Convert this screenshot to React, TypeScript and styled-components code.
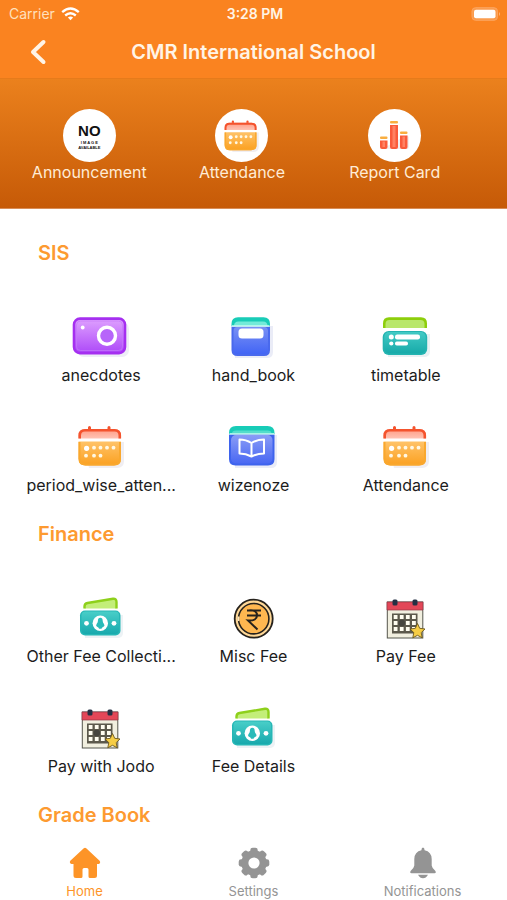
import React from "react";
import styled, { createGlobalStyle } from "styled-components";

const Global = createGlobalStyle`
  * { box-sizing: border-box; }
  body { margin: 0; background: #fff; font-family: Inter, "Liberation Sans", sans-serif; }
  button { font: inherit; color: inherit; background: none; border: 0; padding: 0; cursor: pointer; }
`;

const Screen = styled.div`
  display: flex;
  flex-direction: column;
  min-height: 100vh;
`;

const Header = styled.header`
  background: #fa8320;
  color: #fff4e6;
  border-bottom: 1px solid #e67b1b;
`;

const StatusBar = styled.div`
  display: grid;
  grid-template-columns: 1fr auto 1fr;
  align-items: center;
  height: 27px;
  padding: 0 6px 0 9px;
  font-size: 14px;
`;

const Carrier = styled.span`
  display: flex;
  align-items: center;
  gap: 6px;
  color: #ffe0bd;
`;

const Clock = styled.span`
  font-weight: 600;
`;

const Battery = styled.svg`
  justify-self: end;
`;

const TitleBar = styled.div`
  display: grid;
  grid-template-columns: 76px 1fr 76px;
  align-items: center;
  height: 51px;
  padding-bottom: 1px;
`;

const BackButton = styled.button`
  display: flex;
  justify-content: center;
`;

const Title = styled.h1`
  margin: 0;
  font-size: 20px;
  line-height: 24px;
  font-weight: 600;
  text-align: center;
`;

const Hero = styled.nav`
  display: grid;
  grid-template-columns: repeat(3, 1fr);
  height: 130px;
  padding: 30px 36px 0 13px;
  background: linear-gradient(#eb811d, #c65a07);
  border-bottom: 1px solid #d98d57;
`;

const HeroItem = styled.button`
  display: flex;
  flex-direction: column;
  align-items: center;
  align-self: start;
  color: #ffecd6;
  font-size: 16px;
  line-height: 20px;
`;

const Disc = styled.span`
  display: flex;
  flex-direction: column;
  align-items: center;
  justify-content: center;
  width: 53px;
  height: 53px;
  border-radius: 50%;
  background: #fff;
  color: #111;
`;

const NoText = styled.span<{ $size: number; $line: number }>`
  font-family: "Liberation Sans", sans-serif;
  font-weight: 700;
  font-size: ${(p) => p.$size}px;
  line-height: ${(p) => p.$line}px;
`;

const Main = styled.main`
  flex: 1;
  padding: 24px 25px 0;
`;

const SectionTitle = styled.h2<{ $last?: boolean }>`
  margin: 0;
  padding-left: 13px;
  height: ${(p) => (p.$last ? 38 : 61)}px;
  font-size: 20px;
  line-height: 40px;
  font-weight: 600;
  color: #fd9a30;
`;

const Grid = styled.div`
  display: grid;
  grid-template-columns: repeat(3, 1fr);
`;

const Tile = styled.button`
  display: flex;
  flex-direction: column;
  align-items: center;
  height: 110px;
  padding-top: 20px;
  color: #1c1c1c;
  font-size: 16px;
  line-height: 20px;
  white-space: nowrap;
`;

const TileLabel = styled.span`
  margin-top: 7px;
`;

const TabBar = styled.nav`
  position: sticky;
  bottom: 0;
  display: grid;
  grid-template-columns: repeat(3, 1fr);
  background: #fff;
  padding: 10px 0 1px;
`;

const Tab = styled.a<{ $active?: boolean }>`
  display: flex;
  flex-direction: column;
  align-items: center;
  gap: 4px;
  color: ${(p) => (p.$active ? "#fd9427" : "#949494")};
  font-size: 13px;
  line-height: 16px;
  text-decoration: none;
`;

const Pic = ({ small, children }: { small?: boolean; children: React.ReactNode }) => (
  <svg width={small ? 45 : 60} height={small ? 33 : 44} viewBox="0 0 60 44" aria-hidden="true">
    {children}
  </svg>
);

const Grad = ({ id, from, to }: { id: string; from: string; to: string }) => (
  <linearGradient id={id} x1="0" y1="0" x2="0" y2="1">
    <stop offset="0" stopColor={from} />
    <stop offset="1" stopColor={to} />
  </linearGradient>
);

const Camera = () => (
  <Pic>
    <defs><Grad id="cam" from="#dfa2ff" to="#ad49f8" /></defs>
    <rect x="6" y="8" width="52" height="35" rx="7" fill="#eeeef6" />
    <rect x="3" y="4.600" width="51" height="34.500" rx="6" fill="url(#cam)" stroke="#a52ff0" strokeWidth="2.600" />
    <rect x="5.500" y="7" width="46" height="29.500" rx="4" fill="none" stroke="#c478fb" strokeWidth="1" opacity=".7" />
    <circle cx="11.700" cy="13.500" r="1.900" fill="#fff" />
    <circle cx="36" cy="21.700" r="8.500" fill="#b765fa" stroke="#fff" strokeWidth="3.400" />
  </Pic>
);

const Calendar = ({ small }: { small?: boolean }) => (
  <Pic small={small}>
    <defs>
      <Grad id="calTop" from="#ff9b83" to="#ffc3b4" />
      <Grad id="calBody" from="#ffc368" to="#fba020" />
    </defs>
    <path d="M12 18H53V37Q53 44 46 44H18Z" fill="#f0eef2" />
    <path d="M18.500 3.500v4M38 3.500v4" stroke="#f4532d" strokeWidth="3" strokeLinecap="round" />
    <path d="M7.500 14.500V11.500Q7.500 5 14 5H43.500Q50 5 50 11.500V14.500Z" fill="url(#calTop)" />
    <path d="M8.700 14.500V11.500Q8.700 6.200 14 6.200H43.500Q48.800 6.200 48.800 11.500V14.500" fill="none" stroke="#f4532d" strokeWidth="2.600" />
    <path d="M7.500 17.500H50V34.500Q50 41.500 43 41.500H14.500Q7.500 41.500 7.500 34.500Z" fill="url(#calBody)" />
    <path d="M8.500 18V34.500Q8.500 40.500 14.500 40.500H43Q49 40.500 49 34.500V18" fill="none" stroke="#f9a82e" strokeWidth="2" />
    <circle cx="15.600" cy="24.300" r="2.600" fill="#fff" />
    <g fill="#fff8e4">
      {[23, 29.500, 36, 42.500].map((x) => <circle key={x} cx={x} cy="23.700" r="1.900" />)}
      {[15, 23, 29.500].map((x) => <circle key={x} cx={x} cy="31.700" r="1.900" />)}
    </g>
  </Pic>
);

const HandBook = () => (
  <Pic>
    <defs><Grad id="hand" from="#7990f4" to="#4265f5" /></defs>
    <path d="M12 12H50V38Q50 44 44 44H12Z" fill="#eaecf7" />
    <path d="M8.500 12V10Q8.500 3.300 15 3.300H40.500Q47 3.300 47 10V12Z" fill="#18ccb7" />
    <path d="M11 12Q11 7.500 15.500 7.500H40Q44.500 7.500 44.500 12Z" fill="#73ead9" />
    <path d="M8.500 12.500H47V36Q47 42 41 42H14.500Q8.500 42 8.500 36Z" fill="#4969ed" />
    <rect x="10.500" y="13" width="34.500" height="27" rx="4" fill="url(#hand)" />
    <path d="M9 12H46.500" stroke="#c9fbf0" strokeWidth="1.500" />
    <rect x="15.500" y="14.500" width="25" height="10" rx="3.500" fill="#fff" />
  </Pic>
);

const OpenBook = () => (
  <Pic>
    <defs><Grad id="open" from="#8a9cf6" to="#4968f3" /></defs>
    <path d="M12 11H54V38Q54 44 48 44H12Z" fill="#eaecf7" />
    <path d="M6 10V9Q6 2 13 2H44.500Q51.500 2 51.500 9V10Z" fill="#18ccb7" />
    <path d="M9 9.500Q9 6.500 13 6.500H44.500Q48.500 6.500 48.500 9.500Z" fill="#54ddcb" />
    <path d="M6 10.500H51.500V35Q51.500 41.500 45 41.500H12.500Q6 41.500 6 35Z" fill="#3e63ed" />
    <rect x="8" y="11" width="41.500" height="28.500" rx="5" fill="url(#open)" />
    <path d="M6.500 9.800H51" stroke="#a9f3e6" strokeWidth="1.500" />
    <path d="M28.500 19Q23 15.500 16.500 15.500V29.500Q23 29.500 28.500 32.500Q34 29.500 41 29.500V15.500Q34 15.500 28.500 19V32.500" fill="none" stroke="#fff" strokeWidth="2" strokeLinejoin="round" />
  </Pic>
);

const Timetable = () => (
  <Pic>
    <defs><Grad id="time" from="#42cac5" to="#17aaa9" /></defs>
    <path d="M12 20H54V37Q54 43 48 43H12Z" fill="#e9f1f3" />
    <path d="M7 14V9.500Q7 3.300 13 3.300H45Q51 3.300 51 9.500V14Z" fill="#8dce0b" />
    <path d="M9.500 14V10Q9.500 6 13.500 6H44.500Q48.500 6 48.500 10V14Z" fill="#b9e76b" />
    <rect x="6.700" y="17" width="44.500" height="24" rx="6" fill="#24b4b1" />
    <rect x="8.200" y="18" width="41.500" height="21.500" rx="5" fill="url(#time)" />
    <g fill="#fff">
      <circle cx="15.300" cy="23" r="2.500" />
      <circle cx="15.300" cy="29.500" r="2.100" />
      <rect x="19" y="20.500" width="25" height="5" rx="2.200" />
      <rect x="19" y="27.600" width="13" height="4" rx="1.800" />
    </g>
  </Pic>
);

const Money = () => (
  <Pic>
    <defs><Grad id="cash" from="#48cec8" to="#18a9ad" /></defs>
    <path d="M14 20H52V38Q52 43 46 43H14Z" fill="#edf2f5" />
    <path d="M13.500 13.500V11.500Q13.500 8.500 16.500 8L42 3.800Q45.500 3.500 45.500 7V13.500" fill="#c3ee79" stroke="#8ed01b" strokeWidth="2.400" />
    <rect x="9" y="15.500" width="40.500" height="25" rx="5" fill="#26b7b6" />
    <rect x="10.500" y="16.500" width="37.500" height="22.500" rx="4" fill="url(#cash)" />
    <circle cx="29.300" cy="28.300" r="7.700" fill="#fff" />
    <path d="M29.300 22.800Q31.700 22.800 31.700 26Q31.700 27.500 33 29Q34.200 31 32.500 31.700Q31 32 30.500 33.700H28.100Q27.600 32 26.100 31.700Q24.400 31 25.600 29Q26.900 27.500 26.900 26Q26.900 22.800 29.300 22.800Z" fill="#2abbb9" />
    <circle cx="15.500" cy="28.300" r="2.400" fill="#fff" />
    <circle cx="43" cy="28.300" r="2.400" fill="#fff" />
  </Pic>
);

const Rupee = () => (
  <Pic>
    <circle cx="30.700" cy="23.700" r="19" fill="#ffd897" stroke="#26221d" strokeWidth="1.800" />
    <circle cx="30.700" cy="23.700" r="15.200" fill="#ffb750" stroke="#26221d" strokeWidth="1.600" />
    <path d="M15.600 21.500A16 16 0 0 0 15.600 26" stroke="#ffe7b9" strokeWidth="2" fill="none" />
    <path d="M24 15.500H38M24 20.500H38M25.500 15.500Q34 14.500 34 20.500Q34 26 25 25.500L34.500 34.500" fill="none" stroke="#26221d" strokeWidth="2" />
  </Pic>
);

const StarCalendar = () => (
  <Pic>
    <rect x="11.300" y="7" width="35.500" height="36" fill="#f1efdf" stroke="#55564c" strokeWidth="1" />
    <path d="M11 7H47V15H11Z" fill="#e34758" stroke="#8f3542" strokeWidth=".7" />
    <rect x="16.500" y="4.500" width="5" height="6" rx="1.500" fill="#243044" />
    <rect x="36.500" y="4.500" width="5" height="6" rx="1.500" fill="#243044" />
    <rect x="16" y="18.500" width="25.500" height="20" fill="#5c594c" />
    <g fill="#fffdf0">
      {[20, 26, 32].map((y) => [17.700, 23.800, 29.900, 36].map((x) => (
        <rect key={`${x}-${y}`} x={x} y={y} width="3.800" height="4" />
      )))}
    </g>
    <circle cx="25.800" cy="28" r="3.200" fill="#46453e" />
    <path d="M41.500 28.500L43.700 33.300L49 34L45.200 37.600L46.200 42.800L41.500 40.300L36.800 42.800L37.800 37.600L34 34L39.300 33.300Z" fill="#f6cd45" stroke="#6b571b" strokeWidth=".9" strokeLinejoin="round" />
  </Pic>
);

const Bars = () => (
  <svg width="34" height="34" viewBox="0 0 34 34" aria-hidden="true">
    <path d="M4 30H30L31 28V18L29 16Z" fill="#f2eff1" />
    {[[2, 21.500, 7.500], [12, 6, 8], [22, 16.500, 7.500]].map(([x, y, w]) => (
      <g key={x}>
        <rect x={x} y={y - 4} width={w} height="2.400" rx="1" fill="#f9ae40" />
        <path d={`M${x} ${y}h${w}V28q0 2-2 2h-${w - 4}q-2 0-2-2Z`} fill="#fa5b3b" />
        <rect x={x + 2.500} y={y + 1} width={w - 5} height={27 - y} fill="#ff8163" />
      </g>
    ))}
  </svg>
);

const HomeIcon = () => (
  <svg width="32" height="32" viewBox="0 0 32 32" fill="currentColor" aria-hidden="true">
    <path d="M14.800 1.200Q16 .3 17.200 1.200L30.600 13.800Q32 16 29.800 17H28V28.500Q28 31 25.500 31H21Q19.500 31 19.500 29.500V22.500Q19.500 21 18 21H15Q13.500 21 13.500 22.500V29.500Q13.500 31 12 31H7Q4.500 31 4.500 28.500V17H2.500Q0 16 1.300 13.800Z" />
  </svg>
);

const GearIcon = () => (
  <svg width="32" height="32" viewBox="0 0 32 32" aria-hidden="true">
    <g fill="currentColor">
      {[0, 45, 90, 135].map((a) => (
        <rect key={a} x="12.300" y=".7" width="7.400" height="30.600" rx="2.400" transform={`rotate(${a} 16 16)`} />
      ))}
      <circle cx="16" cy="16" r="12.700" />
    </g>
    <circle cx="16" cy="16" r="5.600" fill="#fff" />
  </svg>
);

const BellIcon = () => (
  <svg width="32" height="32" viewBox="0 0 32 32" fill="currentColor" aria-hidden="true">
    <path d="M16 .5Q17.500 .8 17.600 3.300Q24.500 4.800 24.700 12V18.500Q25 21 28 23.500Q29.800 26 27.500 26.300H4.500Q2.200 26 4 23.500Q7 21 7.300 18.500V12Q7.500 4.800 14.400 3.300Q14.500 .8 16 .5ZM11 27.800H21Q19 31.300 16 31.300Q13 31.300 11 27.800Z" />
  </svg>
);

const sections = [
  {
    title: "SIS",
    tiles: [
      ["anecdotes", Camera], ["hand_book", HandBook], ["timetable", Timetable],
      ["period_wise_atten...", Calendar], ["wizenoze", OpenBook], ["Attendance", Calendar],
    ] as [string, React.ComponentType][],
  },
  {
    title: "Finance",
    tiles: [
      ["Other Fee Collecti...", Money], ["Misc Fee", Rupee], ["Pay Fee", StarCalendar],
      ["Pay with Jodo", StarCalendar], ["Fee Details", Money],
    ] as [string, React.ComponentType][],
  },
];

export default function App() {
  return (
    <Screen>
      <Global />
      <Header>
        <StatusBar>
          <Carrier>
            Carrier
            <svg width="19" height="14" viewBox="0 0 19 14" fill="none" stroke="#fff" strokeWidth="2.400" aria-hidden="true">
              <path d="M1.200 5.200Q9.500 -2 17.800 5.200M4.200 8.500Q9.500 4 14.800 8.500" />
              <path d="M9.500 13.300L6.900 10.500Q9.500 8.500 12.100 10.500Z" fill="#fff" stroke="none" />
            </svg>
          </Carrier>
          <Clock>3:28 PM</Clock>
          <Battery width="30" height="14" viewBox="0 0 30 14" aria-hidden="true">
            <rect x="1" y=".7" width="25.500" height="12.600" rx="3.500" fill="#fb9b4c" stroke="#fca560" />
            <rect x="3" y="2.700" width="21.500" height="8.600" rx="2" fill="#fff" />
            <path d="M28 5Q30 7 28 9Z" fill="#fdb67b" />
          </Battery>
        </StatusBar>
        <TitleBar>
          <BackButton aria-label="Back">
            <svg width="18" height="26" viewBox="0 0 18 26" fill="none" stroke="currentColor" strokeWidth="4" strokeLinecap="round" strokeLinejoin="round" aria-hidden="true">
              <path d="M14.500 3L4 13L14.500 23" />
            </svg>
          </BackButton>
          <Title>CMR International School</Title>
        </TitleBar>
      </Header>
      <Hero aria-label="Shortcuts">
        <HeroItem>
          <Disc>
            <NoText $size={15} $line={18}>NO</NoText>
            <NoText $size={4} $line={5}>I M A G E</NoText>
            <NoText $size={4} $line={5}>AVAILABLE</NoText>
          </Disc>
          Announcement
        </HeroItem>
        <HeroItem>
          <Disc><Calendar small /></Disc>
          Attendance
        </HeroItem>
        <HeroItem>
          <Disc><Bars /></Disc>
          Report Card
        </HeroItem>
      </Hero>
      <Main>
        {sections.map(({ title, tiles }) => (
          <section key={title}>
            <SectionTitle>{title}</SectionTitle>
            <Grid>
              {tiles.map(([label, Icon]) => (
                <Tile key={label}>
                  <Icon />
                  <TileLabel>{label}</TileLabel>
                </Tile>
              ))}
            </Grid>
          </section>
        ))}
        <SectionTitle $last>Grade Book</SectionTitle>
      </Main>
      <TabBar aria-label="Main">
        <Tab href="#home" $active aria-current="page"><HomeIcon />Home</Tab>
        <Tab href="#settings"><GearIcon />Settings</Tab>
        <Tab href="#notifications"><BellIcon />Notifications</Tab>
      </TabBar>
    </Screen>
  );
}
